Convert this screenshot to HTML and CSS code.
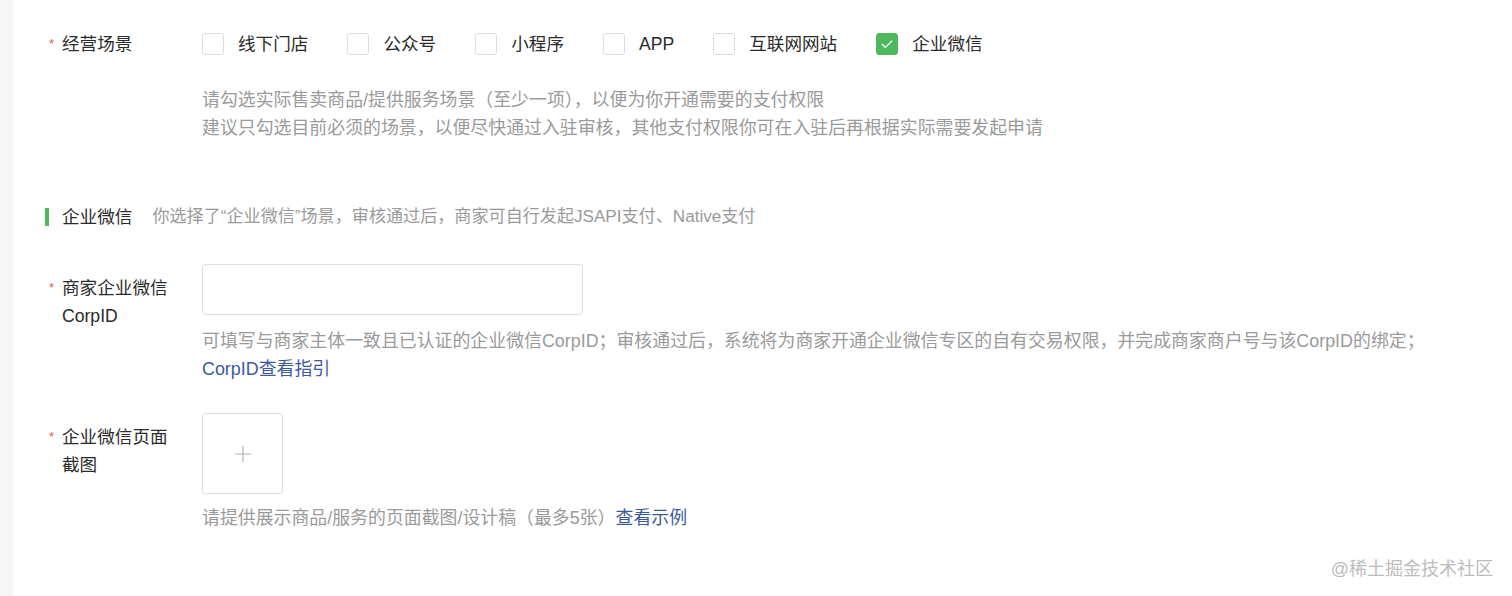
FILE: index.html
```html
<!DOCTYPE html>
<html lang="zh-CN">
<head>
    <meta charset="UTF-8">
    <title>经营场景</title>
    <link rel="stylesheet" href="styles.css">
</head>
<body>
    <div class="panel">
        <!-- 经营场景 -->
        <div class="form-item first">
            <div class="label"><span class="req">*</span><span class="label-text">经营场景</span></div>
            <div class="control">
                <div class="options">
                    <label class="option"><span class="box"></span>线下门店</label>
                    <label class="option"><span class="box"></span>公众号</label>
                    <label class="option"><span class="box"></span>小程序</label>
                    <label class="option"><span class="box"></span>APP</label>
                    <label class="option"><span class="box"></span>互联网网站</label>
                    <label class="option"><span class="box checked"><svg width="16" height="16" viewBox="0 0 16 16"><path d="M2.8 8 L6.4 11.4 L13.2 4.6" fill="none" stroke="#fff" stroke-width="1.3"/></svg></span>企业微信</label>
                </div>
                <div class="tips scene-tips">
                    <p>请勾选实际售卖商品/提供服务场景（至少一项），以便为你开通需要的支付权限</p>
                    <p>建议只勾选目前必须的场景，以便尽快通过入驻审核，其他支付权限你可在入驻后再根据实际需要发起申请</p>
                </div>
            </div>
        </div>

        <div class="section-title">
            <span class="bar"></span>
            <span class="title">企业微信</span>
            <span class="desc">你选择了“企业微信”场景，审核通过后，商家可自行发起JSAPI支付、Native支付</span>
        </div>

        <div class="form-item corp">
            <div class="label"><span class="req">*</span><span class="label-text">商家企业微信CorpID</span></div>
            <div class="control">
                <input class="text-input" type="text">
                <div class="tips input-tips">
                    <p>可填写与商家主体一致且已认证的企业微信CorpID；审核通过后，系统将为商家开通企业微信专区的自有交易权限，并完成商家商户号与该CorpID的绑定；</p>
                    <p><a href="#">CorpID查看指引</a></p>
                </div>
            </div>
        </div>

        <div class="form-item shot">
            <div class="label"><span class="req">*</span><span class="label-text">企业微信页面截图</span></div>
            <div class="control">
                <div class="upload">
                    <svg width="18" height="18" viewBox="0 0 18 18"><path d="M9 1 V17 M1 9 H17" stroke="#b2b2b2" stroke-width="1.2"/></svg>
                </div>
                <div class="tips upload-tips">
                    <p>请提供展示商品/服务的页面截图/设计稿（最多5张）<a href="#">查看示例</a></p>
                </div>
            </div>
        </div>
    </div>
    <div class="watermark">@稀土掘金技术社区</div>
</body>
</html>
```

FILE: styles.css
```css
/* page */
body {
    margin: 0;
    background-color: #f6f6f6;
    font-family: "Liberation Sans", "Noto Sans CJK SC", sans-serif;
    color: #2b2b2b;
    font-size: 17.6px;
}

.panel {
    margin-left: 13px;
    background: #fff;
    height: 596px;
    padding-left: 36px;
    box-sizing: border-box;
    overflow: hidden;
}

p {
    margin: 0;
}

a {
    color: #3b5a9e;
    text-decoration: none;
}

.form-item {
    display: flex;
}

.form-item.first {
    padding-top: 30px;
}

.label {
    width: 153px;
    flex-shrink: 0;
    display: flex;
    line-height: 28px;
}

.req {
    width: 13px;
    flex-shrink: 0;
    color: #e0574f;
    font-size: 13px;
}

.label-text {
    width: 112px;
}

.control {
    flex: 1;
}

/* checkboxes */
.options {
    display: flex;
    height: 28px;
    align-items: center;
}

.option {
    display: flex;
    align-items: center;
    margin-right: 39px;
    line-height: 28px;
}

.box {
    width: 20px;
    height: 20px;
    border: 1px solid #dcdcdc;
    border-radius: 3px;
    margin-right: 14px;
    display: flex;
    align-items: center;
    justify-content: center;
}

.box.checked {
    background: #4fb85e;
    border-color: #4fb85e;
}

.tips {
    color: #9a9a9a;
    line-height: 28px;
    font-size: 17.9px;
}

.scene-tips {
    margin-top: 28px;
}

/* section header */
.section-title {
    display: flex;
    align-items: center;
    margin-top: 61px;
    line-height: 28px;
    margin-left: -4px;
}

.section-title .bar {
    width: 4px;
    height: 18px;
    background: #4fb85e;
    margin-right: 13px;
}

.section-title .title {
    margin-right: 20px;
}

.section-title .desc {
    color: #9a9a9a;
    font-size: 17.1px;
}

/* corp id */
.form-item.corp {
    margin-top: 33px;
}

.form-item.corp .label {
    padding-top: 10px;
}

.text-input {
    display: block;
    width: 381px;
    height: 51px;
    box-sizing: border-box;
    border: 1px solid #dedede;
    border-radius: 4px;
    margin: 0;
}

.input-tips {
    margin-top: 12px;
}

/* screenshot upload */
.form-item.shot {
    margin-top: 30px;
}

.form-item.shot .label {
    padding-top: 10px;
}

.upload {
    width: 81px;
    height: 81px;
    box-sizing: border-box;
    border: 1px solid #dedede;
    border-radius: 3px;
    display: flex;
    align-items: center;
    justify-content: center;
}

.upload-tips {
    margin-top: 10px;
}

.watermark {
    position: absolute;
    right: 19px;
    top: 554px;
    color: #bcbcbc;
    font-size: 18px;
    text-shadow: 0 0 1px #fff;
}
```
